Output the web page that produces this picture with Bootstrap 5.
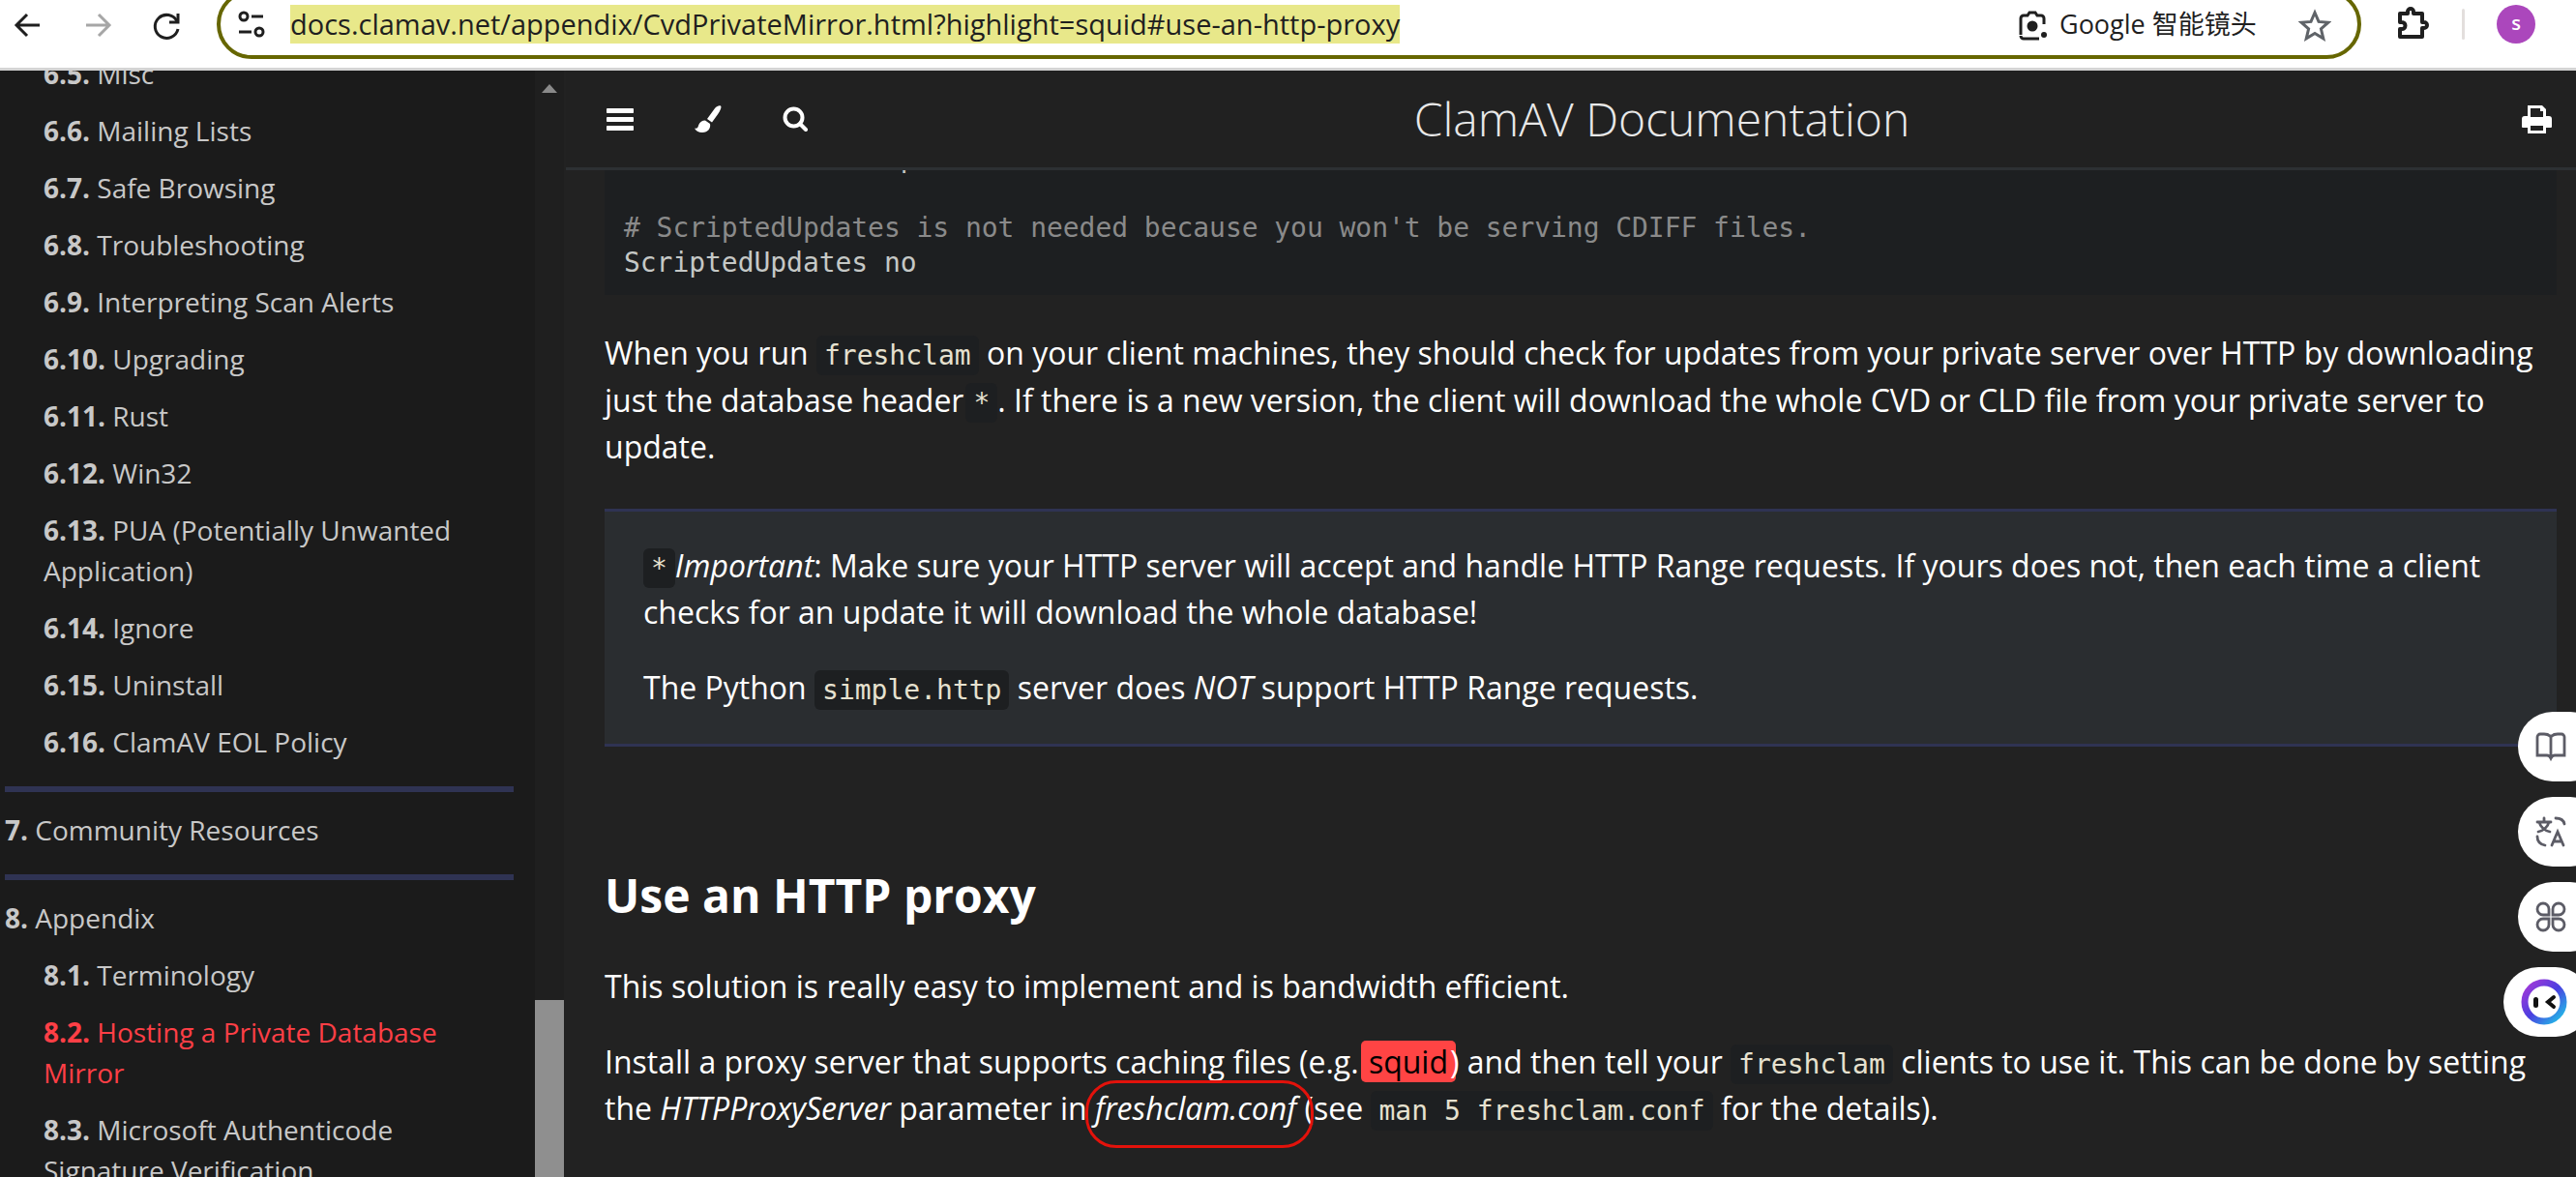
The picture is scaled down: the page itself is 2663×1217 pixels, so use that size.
<!DOCTYPE html>
<html lang="en">
<head>
<meta charset="utf-8">
<title>ClamAV Documentation</title>
<link rel="stylesheet" href="https://cdn.jsdelivr.net/npm/bootstrap@5.3.0/dist/css/bootstrap.min.css">
<style>
html,body{height:100%;margin:0;overflow:hidden;background:#222}
body{font-family:"Open Sans",sans-serif;color:#fff;font-size:32px;line-height:48px}
.tb-bar{height:73px;background:#fff;border-bottom:3px solid #d4d4d4;color:#1f1f1f;position:relative;flex:none}
.tb-ico{position:absolute;top:9px;width:34px;height:34px}
.omni{position:absolute;left:224px;top:-11px;width:2217px;height:72px;border:4px solid #666600;border-radius:36px;background:#fff}
.url-mark{position:absolute;left:300px;top:5px;height:40px;background:#e8e88a;font:29px/40px "Open Sans",sans-serif;color:#1f1f1f;white-space:nowrap}
.lens-txt{position:absolute;left:2129px;top:5px;font:27px/40px "Open Sans","Noto Sans CJK SC",sans-serif;color:#1f1f1f;white-space:nowrap}
.tb-sep{position:absolute;left:2545px;top:9px;width:3px;height:32px;background:#e3dfdd;border-radius:2px}
.avatar{position:absolute;left:2581px;top:5px;width:40px;height:40px;border-radius:50%;background:#ab47bc;color:#fff;font:600 20px/38px "Open Sans",sans-serif;text-align:center}
.shell{height:calc(100vh - 73px);overflow:hidden}
.side{width:553px;flex:none;background:#1b1b1b;font-size:28px;line-height:42px;overflow:hidden}
.side-list{list-style:none;margin:-35px 0 0;padding:0 22px 0 5px}
.side-list ol{list-style:none;margin:0;padding:0 0 0 40px}
.side-list li{margin-top:17px;color:#c8c8c8}
.side-list li b{font-weight:700;color:#c8c8c8}
.side-list li.now,.side-list li.now b{color:#ff3f46}
.side-list li.rule{height:6px;background:#2f3353;margin:25px 0 0}
.side-list li.rule + li{margin-top:18px}
.sbar{width:30px;flex:none;background:#1f1f1f;position:relative}
.sarrow{position:absolute;left:7px;top:14px;width:0;height:0;border:8px solid transparent;border-top:0;border-bottom:9px solid #8a8a8a}
.sthumb{position:absolute;left:0;right:0;bottom:0;height:183px;background:#8f8f8f}
.pane{background:#222;min-width:0;overflow:hidden}
.hdr{height:103px;flex:none;background:#212121;border-bottom:3px solid #2d3033;padding:0 25px 0 42px;margin-left:2px;position:relative;z-index:1}
.hdr-tools{gap:63px}
.hdr-title{font-weight:300;font-size:48px;line-height:64px;color:#e8e8e8;padding-right:6px}
.page{padding:0 20px 0 42px;overflow:hidden;min-height:0}
.codeblock{background:#1d1f21;color:#c5c8c6;margin:-30px 0 0;padding:0 20px 15px;font:28px/36px "DejaVu Sans Mono",monospace;letter-spacing:-.05px;white-space:pre;overflow:hidden}
.cmt{color:#8a8a8a}
.hlp{margin:0 0 29.5px}
.first{margin-top:36px;margin-bottom:0;line-height:48.5px}
.mono{font-family:"DejaVu Sans Mono",monospace;font-size:28px;line-height:1;background:#1d1f21;color:#e6e1cf;border-radius:6px;padding:4px 8px}
.snug{margin-left:2px}
.quote{background:#2a2d30;border-top:3px solid #2f3353;border-bottom:3px solid #2f3353;padding:31.5px 20px 33.5px 40px;margin:39.5px 0 0}
.quote p{margin:0 0 30.5px}
.quote p:last-child{margin:0}
.pg-head{font-size:48px;font-weight:700;line-height:72px;margin:118px 0 0;color:#fff}
.lead-gap{margin-top:34.5px}
.hit{background:#ff4444;color:#000;border-radius:5px;padding:0 8px;margin:0 -6px}
.ring{position:absolute;left:1122px;top:1117px;width:236px;height:70px;border:3px solid #e3120b;border-radius:32px;pointer-events:none}
.fab{position:absolute;left:2603px;width:90px;height:72px;border-radius:36px;background:#fff;display:flex;align-items:center;padding-left:18px}
.fab.wide{left:2588px;padding-left:18px}
</style>
</head>
<body>
<div class="d-flex flex-column vh-100">
  <div class="tb-bar">
    <svg class="tb-ico" style="left:12px" viewBox="0 0 34 34" fill="none" stroke="#1f1f1f" stroke-width="3"><path d="M29 17H7M16 6 5 17l11 11"/></svg>
    <svg class="tb-ico" style="left:84px" viewBox="0 0 34 34" fill="none" stroke="#a6a6a6" stroke-width="3"><path d="M5 17h22M18 6l11 11-11 11"/></svg>
    <svg class="tb-ico" style="left:156px" viewBox="0 0 34 34" fill="none" stroke="#1f1f1f" stroke-width="3"><path d="M27 13a12 12 0 1 0 1 8"/><path d="M28 5v9h-9"/></svg>
    <div class="omni"></div>
    <svg class="tb-ico" style="left:243px" viewBox="0 0 34 34" fill="none" stroke="#1f1f1f" stroke-width="3"><circle cx="9" cy="8" r="4"/><path d="M17 8h12M4 24h13"/><circle cx="25" cy="24" r="4"/></svg>
    <div class="url-mark">docs.clamav.net/appendix/CvdPrivateMirror.html?highlight=squid#use-an-http-proxy</div>
    <svg class="tb-ico" style="left:2084px" viewBox="0 0 34 34" fill="none" stroke="#1f1f1f" stroke-width="3"><path d="M5 27V10a3 3 0 0 1 3-3h4l2-3h6l2 3h4a3 3 0 0 1 3 3v6M24 31H8a3 3 0 0 1-3-3"/><circle cx="17" cy="18" r="4" fill="#1f1f1f"/><circle cx="29" cy="27" r="3" fill="#1f1f1f" stroke="none"/></svg>
    <div class="lens-txt">Google 智能镜头</div>
    <svg class="tb-ico" style="left:2376px;top:9px" viewBox="0 0 34 34" fill="none" stroke="#5f6368" stroke-width="3"><path d="M17 4l4 9.400 10 .8-7.600 6.600 2.400 10L17 25.500 8.200 30.800l2.400-10L3 14.200l10-.8z"/></svg>
    <svg class="tb-ico" style="left:2478px;top:7px" viewBox="0 0 34 34" fill="none" stroke="#1f1f1f" stroke-width="4" stroke-linejoin="round"><path d="M3 7h8V5a3 3 0 0 1 6 0v2h9v9h2a3 3 0 0 1 0 6h-2v9H3v-8h2a3.500 3.500 0 0 0 0-7H3z"/></svg>
    <div class="tb-sep"></div>
    <div class="avatar">s</div>
  </div>
  <div class="shell d-flex">
    <nav class="side">
      <ol class="side-list">
        <li><ol>
          <li><b>6.5.</b> Misc</li>
          <li><b>6.6.</b> Mailing Lists</li>
          <li><b>6.7.</b> Safe Browsing</li>
          <li><b>6.8.</b> Troubleshooting</li>
          <li><b>6.9.</b> Interpreting Scan Alerts</li>
          <li><b>6.10.</b> Upgrading</li>
          <li><b>6.11.</b> Rust</li>
          <li><b>6.12.</b> Win32</li>
          <li><b>6.13.</b> PUA (Potentially Unwanted Application)</li>
          <li><b>6.14.</b> Ignore</li>
          <li><b>6.15.</b> Uninstall</li>
          <li><b>6.16.</b> ClamAV EOL Policy</li>
        </ol></li>
        <li class="rule"></li>
        <li><b>7.</b> Community Resources</li>
        <li class="rule"></li>
        <li><b>8.</b> Appendix
          <ol>
            <li><b>8.1.</b> Terminology</li>
            <li class="now"><b>8.2.</b> Hosting a Private Database Mirror</li>
            <li><b>8.3.</b> Microsoft Authenticode Signature Verification</li>
          </ol>
        </li>
      </ol>
    </nav>
    <div class="sbar"><div class="sarrow"></div><div class="sthumb"></div></div>
    <main class="pane flex-grow-1 d-flex flex-column">
      <header class="hdr d-flex align-items-center">
        <div class="hdr-tools d-flex align-items-center">
          <svg width="28" height="23" viewBox="0 0 28 23" fill="#fff"><rect width="28" height="5" rx=".8"/><rect y="9" width="28" height="5" rx=".8"/><rect y="18" width="28" height="5" rx=".8"/></svg>
          <svg width="28" height="28" viewBox="0 0 28 28" fill="#fff"><path d="M27 .6c1.500 1-1 6.400-5 11.400l-4 5.500-5-3.500L21 3c2-2 4.500-3.200 6-2.400z"/><path d="M11 15.500l5 3.500c1 4.500-2 9-8 9-4 0-7-2-8-4.500 3 1 3.500-1 4.300-3.500.9-2.500 3.700-4.500 6.700-4.500z"/></svg>
          <svg width="26" height="26" viewBox="0 0 26 26" fill="none" stroke="#fff" stroke-width="4"><circle cx="11.500" cy="11.500" r="9"/><path d="M18 18l6 6" stroke-linecap="round"/></svg>
        </div>
        <div class="hdr-title flex-grow-1 text-center">ClamAV Documentation</div>
        <svg width="31" height="29" viewBox="0 0 31 29" fill="#fff"><path fill-rule="evenodd" d="M6 0h15l4 4v7h3a3 3 0 0 1 3 3v8a1 1 0 0 1-1 1h-5v6H6v-6H1a1 1 0 0 1-1-1v-8a3 3 0 0 1 3-3h3zm3 3v9h13V6h-3V3zm0 18v5h13v-5z"/></svg>
      </header>
      <article class="page">
        <pre class="codeblock">PrivateMirror http://

<span class="cmt"># ScriptedUpdates is not needed because you won't be serving CDIFF files.</span>
ScriptedUpdates no</pre>
        <p class="first">When you run <span class="mono">freshclam</span> on your client machines, they should check for updates from your private server over HTTP by downloading just the database header<span class="mono snug">*</span>. If there is a new version, the client will download the whole CVD or CLD file from your private server to update.</p>
        <div class="quote">
          <p><span class="mono">*</span><em>Important</em>: Make sure your HTTP server will accept and handle HTTP Range requests. If yours does not, then each time a client checks for an update it will download the whole database!</p>
          <p>The Python <span class="mono">simple.http</span> server does <em>NOT</em> support HTTP Range requests.</p>
        </div>
        <h2 class="pg-head">Use an HTTP proxy</h2>
        <p class="hlp lead-gap">This solution is really easy to implement and is bandwidth efficient.</p>
        <p class="hlp">Install a proxy server that supports caching files (e.g. <span class="hit">squid</span>) and then tell your <span class="mono">freshclam</span> clients to use it. This can be done by setting the <em>HTTPProxyServer</em> parameter in <em>freshclam.conf</em> (see <span class="mono">man 5 freshclam.conf</span> for the details).</p>
      </article>
    </main>
  </div>
</div>
<div class="ring"></div>
<div class="fab" style="top:736px"><svg width="32" height="32" viewBox="0 0 32 32" fill="none" stroke="#5c5c66" stroke-width="2.800"><path d="M15 5c-2-2-4-2-6-2H5a3 3 0 0 0-3 3v19h10c2 0 3 1 4 3 1-2 2-3 4-3h10V6a3 3 0 0 0-3-3h-4c-2 0-4 0-6 2zM16 6v22"/></svg></div>
<div class="fab" style="top:824px"><svg width="32" height="32" viewBox="0 0 32 32" fill="none" stroke="#5c5c66" stroke-width="2.800" stroke-linecap="round"><path d="M2 6h14M9 2v4M4 6c1 5 6 9 11 10M14 6c-1 5-6 9-11 10M21 2c4 0 8 1 9 6M2 21c0 5 3 8 8 9M17 30l6-14 6 14M19 26h8"/></svg></div>
<div class="fab" style="top:912px"><svg width="32" height="32" viewBox="0 0 32 32" fill="none" stroke="#5c5c66" stroke-width="2.800"><path d="M14 14H8a6 6 0 1 1 6-6zM18 14h6a6 6 0 1 0-6-6zM14 18H8a6 6 0 1 0 6 6zM18 18h6a6 6 0 1 1-6 6z"/></svg></div>
<div class="fab wide" style="top:1000px"><svg width="48" height="48" viewBox="0 0 48 48"><defs><linearGradient id="rg" x1="0" y1="0" x2="1" y2="1"><stop offset="0" stop-color="#a838d8"/><stop offset=".5" stop-color="#4a3fe0"/><stop offset="1" stop-color="#1ec8e8"/></linearGradient></defs><circle cx="24" cy="24" r="20" fill="#fff" stroke="url(#rg)" stroke-width="7"/><rect x="13" y="19" width="5" height="11" rx="2.500" fill="#111"/><path d="M34 19l-6 5 6 5" fill="none" stroke="#111" stroke-width="4" stroke-linecap="round"/></svg></div>
</body>
</html>
